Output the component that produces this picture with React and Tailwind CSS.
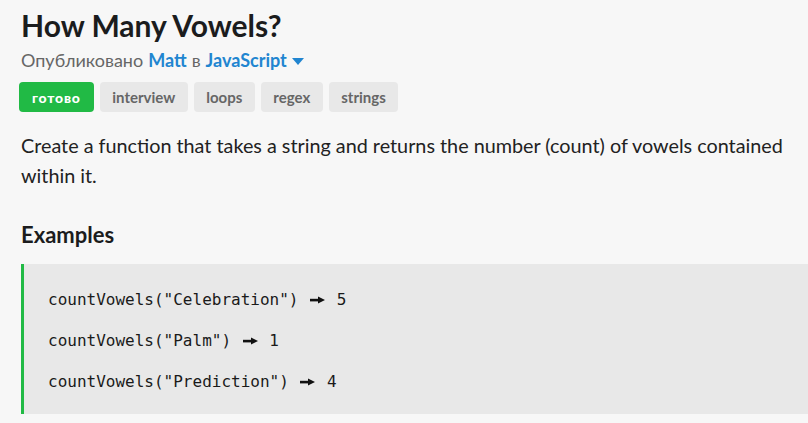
function Arrow() {
  return (
    <svg width="19" height="10" viewBox="0 0 19 10" className="inline-block align-middle -mt-[2px]">
      <rect x="2" y="3.8" width="10" height="2.6" fill="#111" />
      <path d="M10 1.6 L17 5.1 L10 8.6 Z" fill="#111" />
    </svg>
  );
}

export default function App() {
  const examples = [
    ['"Celebration"', "5"],
    ['"Palm"', "1"],
    ['"Prediction"', "4"],
  ];

  return (
    <div
      className="min-h-screen w-full overflow-hidden bg-[#f7f7f7] pl-[19px] text-[#1f1f1f]"
      style={{ fontFamily: "Lato, 'Noto Sans', sans-serif" }}
    >
      {/* Title */}
      <h1 className="pl-[2px] pt-[7px] text-[30px] leading-[36px] font-bold text-[#1b1c1d]">
        How Many Vowels?
      </h1>

      {/* Author line */}
      <div className="mt-[5px] flex items-center pl-[2px] text-[18px] leading-[24px] text-[#666]">
        <span>Опубликовано</span>
        <span className="ml-[5px] font-bold text-[#2185d0]">Matt</span>
        <span className="ml-[5px]">в</span>
        <span className="ml-[5px] font-bold text-[#2185d0]">JavaScript</span>
        <svg width="12" height="7" viewBox="0 0 12 7" className="ml-[5px] mt-[2px]">
          <path d="M0 0 L12 0 L6 7 Z" fill="#2185d0" />
        </svg>
      </div>

      {/* Tags */}
      <div className="mt-[10px] flex gap-[6px]">
        <span className="flex h-[30px] items-center rounded bg-[#21ba45] px-[13px] text-[14px] font-black tracking-[0.8px] text-white">
          готово
        </span>
        {["interview", "loops", "regex", "strings"].map((tag) => (
          <span
            key={tag}
            className="flex h-[30px] items-center rounded bg-[#e8e8e8] px-[12.5px] text-[15px] font-bold text-[#666]"
          >
            {tag}
          </span>
        ))}
      </div>

      {/* Description */}
      <p className="mt-[18px] max-w-[775px] pl-[2px] text-[19.8px] leading-[30px] text-[#222]">
        Create a function that takes a string and returns the number (count) of vowels contained
        within it.
      </p>

      {/* Examples */}
      <h2 className="mt-[31px] pl-[2px] text-[22px] leading-[28px] font-bold text-[#1b1c1d]">
        Examples
      </h2>

      <div
        className="ml-[2px] mt-[15px] border-l-[3px] border-[#21ba45] bg-[#e8e8e8] pt-[15px] pb-[12px] pl-[24px] text-[16px] leading-[41px] text-[#1a1a1a]"
        style={{ fontFamily: "'DejaVu Sans Mono', monospace" }}
      >
        {examples.map(([arg, res]) => (
          <div key={arg} className="whitespace-pre">
            countVowels({arg}) <Arrow /> {res}
          </div>
        ))}
      </div>
    </div>
  );
}
